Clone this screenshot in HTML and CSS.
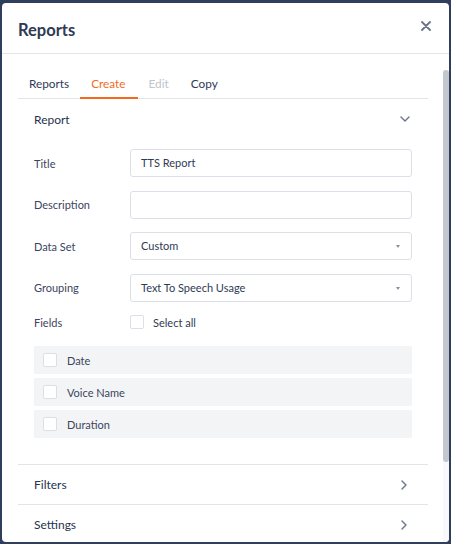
FILE: index.html
```html
<!DOCTYPE html>
<html>
<head>
<meta charset="utf-8">
<link rel="stylesheet" href="styles.css">
</head>
<body>
<div class="modal">
  <div class="modal-header">
    <h1 class="modal-title">Reports</h1>
    <button class="close" aria-label="Close">
      <svg width="10" height="10" viewBox="0 0 10 10"><path d="M1 1L9 9M9 1L1 9" stroke="#6b7389" stroke-width="1.8" stroke-linecap="round"/></svg>
    </button>
  </div>
  <div class="modal-main">
    <div class="modal-body">
      <div class="tabs">
        <span class="tab">Reports</span>
        <span class="tab active">Create</span>
        <span class="tab disabled">Edit</span>
        <span class="tab">Copy</span>
      </div>

      <div class="section open">
        <div class="section-head">
          <span>Report</span>
          <svg width="10" height="6" viewBox="0 0 10 6"><path d="M1 1L5 5L9 1" fill="none" stroke="#6b7389" stroke-width="1.4" stroke-linecap="round" stroke-linejoin="round"/></svg>
        </div>
        <div class="form">
          <label class="label">Title</label>
          <div class="input">TTS Report</div>
          <label class="label">Description</label>
          <div class="input"></div>
          <label class="label">Data Set</label>
          <div class="input select">Custom<span class="caret"></span></div>
          <label class="label">Grouping</label>
          <div class="input select">Text To Speech Usage<span class="caret"></span></div>
          <label class="label">Fields</label>
          <div class="check-line"><span class="box"></span>Select all</div>
        </div>
        <div class="fields">
          <div class="field"><span class="box"></span>Date</div>
          <div class="field"><span class="box"></span>Voice Name</div>
          <div class="field"><span class="box"></span>Duration</div>
        </div>
      </div>

      <div class="section collapsed">
        <div class="section-head">
          <span>Filters</span>
          <svg width="6" height="10" viewBox="0 0 6 10"><path d="M1 1L5 5L1 9" fill="none" stroke="#6b7389" stroke-width="1.4" stroke-linecap="round" stroke-linejoin="round"/></svg>
        </div>
      </div>
      <div class="section collapsed">
        <div class="section-head">
          <span>Settings</span>
          <svg width="6" height="10" viewBox="0 0 6 10"><path d="M1 1L5 5L1 9" fill="none" stroke="#6b7389" stroke-width="1.4" stroke-linecap="round" stroke-linejoin="round"/></svg>
        </div>
      </div>
    </div>
    <div class="scrollbar">
      <div class="track"><div class="thumb"></div></div>
    </div>
  </div>
</div>
</body>
</html>
```
FILE: styles.css
```css
* { box-sizing: border-box; }
html, body { margin: 0; padding: 0; }
body {
  background: #2f3e5c;
  font-family: Lato, "Open Sans", sans-serif;
  color: #2f3a55;
  height: 544px;
  overflow: hidden;
}
.modal {
  margin: 3px 2px 2px 2px;
  height: 539px;
  background: #fff;
  border-radius: 4px;
  display: flex;
  flex-direction: column;
  overflow: hidden;
}
.modal-header {
  height: 51px;
  flex: none;
  display: flex;
  align-items: center;
  justify-content: space-between;
  padding: 0 18px 2px 16px;
  border-bottom: 1px solid #e2e4e8;
}
.modal-title {
  margin: 5px 0 0 0;
  font-size: 16.5px;
  font-weight: 700;
  color: #2f3a55;
}
.close {
  border: 0;
  background: none;
  padding: 0;
  display: flex;
  margin-top: -3px;
}
.modal-main {
  flex: 1;
  min-height: 0;
  display: flex;
}
.modal-body {
  flex: 1;
  min-width: 0;
  overflow: hidden;
  padding: 16px 15px 0 16px;
}
.scrollbar {
  width: 6px;
  flex: none;
  padding-top: 16px;
  display: flex;
}
.track {
  flex: 1;
  background: #f8f9fb;
}
.thumb {
  height: 392px;
  background: #c3c7ce;
  border-radius: 3px;
}

.tabs {
  display: flex;
  height: 29px;
  border-bottom: 1px solid #e2e4e8;
}
.tab {
  padding: 0 11px;
  font-size: 11.8px;
  line-height: 28px;
  color: #2f3a55;
}
.tab.active {
  color: #f26b1d;
  border-bottom: 2px solid #f26b1d;
  margin-bottom: -1px;
  padding-right: 12px;
}
.tab.disabled { color: #c0c4cc; }

.section {
  border-bottom: 1px solid #e2e4e8;
  padding: 0 16px;
}
.section.open { padding-bottom: 26px; }
.section-head {
  height: 40px;
  display: flex;
  align-items: center;
  justify-content: space-between;
  font-size: 12px;
  color: #27324d;
}
.collapsed .section-head { height: 39px; }
.section-head svg { margin-right: 2px; }
.collapsed .section-head svg { margin-right: 5px; }
.form {
  display: grid;
  grid-template-columns: 96px 1fr;
  row-gap: 13.5px;
  align-items: center;
  margin-top: 10px;
}
.label {
  font-size: 11px;
  color: #3b4560;
}
.input {
  height: 28px;
  border: 1px solid #dcdfe6;
  border-radius: 3px;
  padding: 0 10px;
  font-size: 11px;
  line-height: 26px;
  color: #2f3a55;
  position: relative;
}
.caret {
  position: absolute;
  right: 11px;
  top: 12px;
  width: 0;
  height: 0;
  border-left: 2.5px solid transparent;
  border-right: 2.5px solid transparent;
  border-top: 3px solid #8a91a0;
}
.check-line {
  display: flex;
  align-items: center;
  font-size: 11px;
  color: #2f3a55;
  height: 14px;
}
.box {
  width: 14px;
  height: 14px;
  border: 1px solid #dcdfe6;
  border-radius: 2px;
  background: #fff;
  margin-right: 9px;
  flex: none;
}
.fields {
  margin-top: 17px;
  display: flex;
  flex-direction: column;
  gap: 4px;
}
.field {
  height: 28px;
  background: #f3f4f6;
  display: flex;
  align-items: center;
  padding-left: 9px;
  font-size: 11px;
  color: #3b4560;
}
.field .box { margin-right: 10px; }
```
